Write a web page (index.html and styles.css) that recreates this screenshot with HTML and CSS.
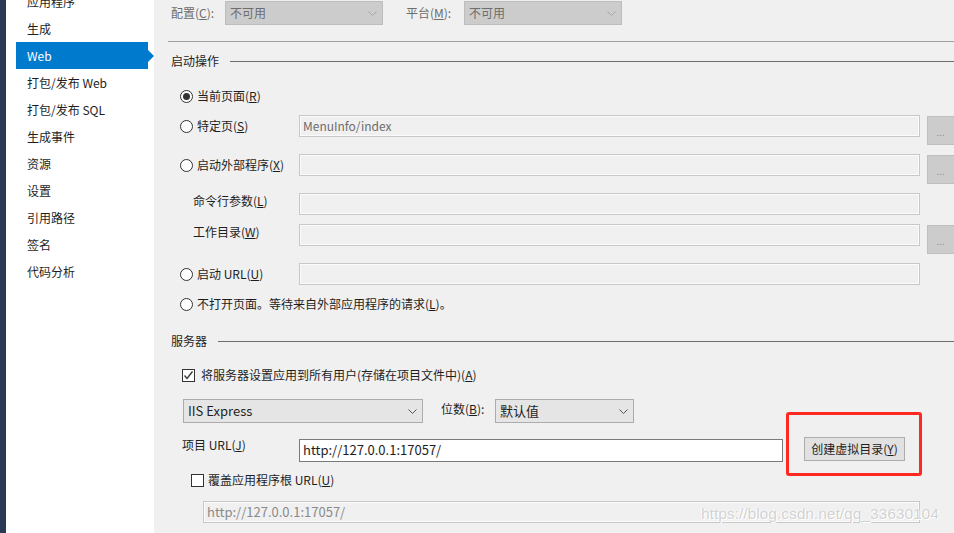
FILE: index.html
```html
<!DOCTYPE html>
<html lang="zh-CN">
<head>
    <meta charset="UTF-8">
    <meta name="viewport" content="width=device-width, initial-scale=1.0">
    <title>项目属性 - Web</title>
    <link rel="stylesheet" href="styles.css">
</head>
<body>
    <div class="window">
        <div class="edge"></div>
        <nav class="sidebar">
            <ul class="nav-list">
                <li class="nav-item">应用程序</li>
                <li class="nav-item">生成</li>
                <li class="nav-item active">Web</li>
                <li class="nav-item">打包/发布 Web</li>
                <li class="nav-item">打包/发布 SQL</li>
                <li class="nav-item">生成事件</li>
                <li class="nav-item">资源</li>
                <li class="nav-item">设置</li>
                <li class="nav-item">引用路径</li>
                <li class="nav-item">签名</li>
                <li class="nav-item">代码分析</li>
            </ul>
        </nav>

        <main class="content">
            <div class="config-row">
                <span class="config-label muted">配置(<u>C</u>):</span>
                <div class="select select-off select-config">
                    <span>不可用</span>
                    <svg class="chevron" width="9" height="5" viewBox="0 0 9 5"><polyline points="0.5,0.5 4.5,4.5 8.5,0.5" fill="none" stroke="#a8a8a8"/></svg>
                </div>
                <span class="config-label muted platform-label">平台(<u>M</u>):</span>
                <div class="select select-off select-config">
                    <span>不可用</span>
                    <svg class="chevron" width="9" height="5" viewBox="0 0 9 5"><polyline points="0.5,0.5 4.5,4.5 8.5,0.5" fill="none" stroke="#a8a8a8"/></svg>
                </div>
            </div>

            <div class="divider"></div>

            <div class="section-head start-head">
                <span class="section-title">启动操作</span>
                <i class="rule"></i>
            </div>

            <div class="row row-current">
                <label class="opt"><span class="radio checked"></span><span>当前页面(<u>R</u>)</span></label>
            </div>
            <div class="row row-gap8">
                <label class="opt"><span class="radio"></span><span>特定页(<u>S</u>)</span></label>
                <div class="field">MenuInfo/index</div>
                <button class="browse">...</button>
            </div>
            <div class="row row-gap17">
                <label class="opt"><span class="radio"></span><span>启动外部程序(<u>X</u>)</span></label>
                <div class="field"></div>
                <button class="browse">...</button>
            </div>
            <div class="row row-gap17 row-top">
                <span class="sub-label">命令行参数(<u>L</u>)</span>
                <div class="field"></div>
            </div>
            <div class="row row-gap9 row-top">
                <span class="sub-label">工作目录(<u>W</u>)</span>
                <div class="field"></div>
                <button class="browse">...</button>
            </div>
            <div class="row row-gap17">
                <label class="opt"><span class="radio"></span><span>启动 URL(<u>U</u>)</span></label>
                <div class="field"></div>
            </div>
            <div class="row row-gap8">
                <label class="opt opt-wide"><span class="radio"></span><span>不打开页面。等待来自外部应用程序的请求(<u>L</u>)。</span></label>
            </div>

            <div class="section-head server-head">
                <span class="section-title">服务器</span>
                <i class="rule"></i>
            </div>

            <div class="row check-row">
                <label class="check-label"><span class="checkbox checked">
                    <svg width="11" height="11" viewBox="0 0 11 11"><polyline points="1.5,5.5 4,8.5 9.5,1.5" fill="none" stroke="#333" stroke-width="1.3"/></svg>
                </span><span>将服务器设置应用到所有用户(存储在项目文件中)(<u>A</u>)</span></label>
            </div>

            <div class="server-row">
                <div class="select select-iis">
                    <span>IIS Express</span>
                    <svg class="chevron" width="9" height="5" viewBox="0 0 9 5"><polyline points="0.5,0.5 4.5,4.5 8.5,0.5" fill="none" stroke="#555"/></svg>
                </div>
                <span class="bits-label">位数(<u>B</u>):</span>
                <div class="select select-bits">
                    <span>默认值</span>
                    <svg class="chevron" width="9" height="5" viewBox="0 0 9 5"><polyline points="0.5,0.5 4.5,4.5 8.5,0.5" fill="none" stroke="#555"/></svg>
                </div>
            </div>

            <div class="url-row">
                <span class="url-label">项目 URL(<u>J</u>)</span>
                <div class="field field-live">http://127.0.0.1:17057/</div>
                <button class="action">创建虚拟目录(<u>Y</u>)</button>
            </div>

            <div class="row override-row">
                <label class="check-label"><span class="checkbox"></span><span>覆盖应用程序根 URL(<u>U</u>)</span></label>
            </div>

            <div class="field field-root">http://127.0.0.1:17057/</div>
        </main>

        <div class="highlight"></div>
        <div class="watermark">https://blog.csdn.net/qq_33630104</div>
    </div>
</body>
</html>
```
FILE: styles.css
```css
body {
    margin: 0;
    background: #f0f0f0;
    font-family: "Noto Sans CJK SC", "Noto Sans", sans-serif;
    font-size: 12px;
    color: #1e1e1e;
    overflow: hidden;
}
u {
    text-underline-offset: 1px;
}
.window {
    display: flex;
    height: 533px;
    position: relative;
}
.edge {
    width: 6px;
    flex: none;
    background: #293955;
}
.sidebar {
    width: 148px;
    flex: none;
    background: #ffffff;
}
.nav-list {
    list-style: none;
    margin: -12px 0 0 10px;
    padding: 0;
}
.nav-item {
    position: relative;
    width: 121px;
    height: 27px;
    line-height: 27px;
    padding-left: 11px;
    white-space: nowrap;
}
.nav-item.active {
    background: #007acc;
    color: #ffffff;
}
.nav-item.active::after {
    content: "";
    position: absolute;
    right: -6px;
    top: 8px;
    border-left: 6px solid #007acc;
    border-top: 6px solid transparent;
    border-bottom: 6px solid transparent;
}

/* content */
.content {
    flex: 1;
    min-width: 0;
    padding-left: 14px;
}
.config-row {
    display: flex;
    align-items: center;
    height: 24px;
    margin-top: 1px;
}
.config-label {
    width: 54px;
    margin-left: 3px;
    line-height: 16px;
    white-space: nowrap;
}
.platform-label {
    width: 58px;
    margin-left: 23px;
}
.muted {
    color: #6d6d6d;
}
.select {
    box-sizing: border-box;
    display: flex;
    align-items: center;
    justify-content: space-between;
    height: 24px;
    padding: 0 5px 0 4px;
    border: 1px solid #acacac;
    background: #e5e5e5;
    line-height: 16px;
}
.select-off {
    background: #cccccc;
    border-color: #bdbdbd;
    color: #6d6d6d;
}
.select-config {
    width: 158px;
}
.chevron {
    flex: none;
}
.divider {
    height: 1px;
    margin-top: 16px;
    background: #a0a0a0;
}
.section-head {
    display: flex;
    align-items: center;
    height: 16px;
}
.start-head {
    margin-top: 11px;
}
.server-head {
    margin-top: 18px;
}
.section-title {
    margin-left: 3px;
    line-height: 16px;
    white-space: nowrap;
}
.start-head .section-title {
    width: 59px;
}
.server-head .section-title {
    width: 47px;
}
.rule {
    flex: 1;
    height: 1px;
    background: #6d6d6d;
}

/* startup rows */
.row {
    display: flex;
    align-items: center;
    height: 22px;
    padding-left: 12px;
}
.row-current {
    margin-top: 16px;
}
.row-gap8 {
    margin-top: 8px;
}
.row-gap9 {
    margin-top: 9px;
}
.row-gap17 {
    margin-top: 17px;
}
.row-top {
    align-items: flex-start;
}
.opt {
    display: flex;
    align-items: center;
    gap: 4px;
    width: 119px;
    flex: none;
    line-height: 16px;
    white-space: nowrap;
}
.opt-wide {
    width: auto;
}
.sub-label {
    width: 106px;
    flex: none;
    padding-left: 13px;
    line-height: 16px;
    white-space: nowrap;
}
.radio {
    box-sizing: border-box;
    width: 13px;
    height: 13px;
    flex: none;
    border: 1px solid #333333;
    border-radius: 50%;
    background: #ffffff;
    display: flex;
    align-items: center;
    justify-content: center;
}
.radio.checked::after {
    content: "";
    width: 7px;
    height: 7px;
    border-radius: 50%;
    background: #333333;
}
.field {
    box-sizing: border-box;
    width: 621px;
    height: 22px;
    flex: none;
    padding-left: 3px;
    border: 1px solid #c8c8c8;
    box-shadow: inset 0 0 0 1px #fbfbfb;
    background: #f0f0f0;
    color: #6d6d6d;
    line-height: 20px;
    white-space: nowrap;
    overflow: hidden;
}
.browse {
    box-sizing: border-box;
    width: 32px;
    height: 29px;
    flex: none;
    align-self: flex-start;
    margin: 1px 0 0 7px;
    padding: 0 5px 0 0;
    border: 1px solid #bfbfbf;
    background: #cccccc;
    color: #8c8c8c;
    font-family: "Liberation Sans", sans-serif;
    font-size: 10px;
    line-height: 32px;
}

/* server */
.check-row {
    margin-top: 15px;
    padding-left: 14px;
}
.check-label {
    display: flex;
    align-items: center;
    gap: 6px;
    line-height: 16px;
    white-space: nowrap;
}
.checkbox {
    box-sizing: border-box;
    width: 13px;
    height: 13px;
    flex: none;
    border: 1px solid #333333;
    background: #ffffff;
    display: flex;
    align-items: center;
    justify-content: center;
}
.server-row {
    display: flex;
    align-items: center;
    height: 24px;
    margin-top: 13px;
    padding-left: 15px;
}
.select-iis {
    width: 240px;
    font-size: 13px;
}
.bits-label {
    width: 54px;
    margin-left: 18px;
    line-height: 16px;
    white-space: nowrap;
    align-self: flex-start;
    margin-top: 2px;
}
.select-bits {
    width: 139px;
    font-size: 13px;
}
.url-row {
    display: flex;
    align-items: flex-start;
    height: 25px;
    margin-top: 14px;
    padding-left: 14px;
}
.url-label {
    width: 117px;
    flex: none;
    line-height: 16px;
    white-space: nowrap;
}
.field-live {
    width: 484px;
    height: 23px;
    margin-top: 2px;
    border-color: #7a7a7a;
    box-shadow: none;
    background: #ffffff;
    color: #1e1e1e;
    font-size: 13px;
}
.action {
    box-sizing: border-box;
    width: 101px;
    height: 24px;
    flex: none;
    margin-left: 21px;
    padding: 0;
    border: 1px solid #adadad;
    background: #e1e1e1;
    color: #1e1e1e;
    font-family: inherit;
    font-size: 12px;
    line-height: 16px;
}
.override-row {
    margin-top: 7px;
    padding-left: 23px;
}
.override-row .check-label {
    gap: 4px;
}
.field-root {
    width: 717px;
    margin: 10px 0 0 35px;
    color: #8a8a8a;
    font-size: 13px;
}

/* overlays */
.highlight {
    position: absolute;
    left: 786px;
    top: 412px;
    width: 130px;
    height: 58px;
    border: 3px solid #ff2a1f;
    border-radius: 3px;
}
.watermark {
    position: absolute;
    left: 701px;
    top: 505px;
    font-family: "Liberation Sans", sans-serif;
    font-size: 15.5px;
    color: #d2d2d2;
    text-shadow: 1px 1px 0 #ffffff, -1px 0 0 #ffffff;
    white-space: nowrap;
}
```
